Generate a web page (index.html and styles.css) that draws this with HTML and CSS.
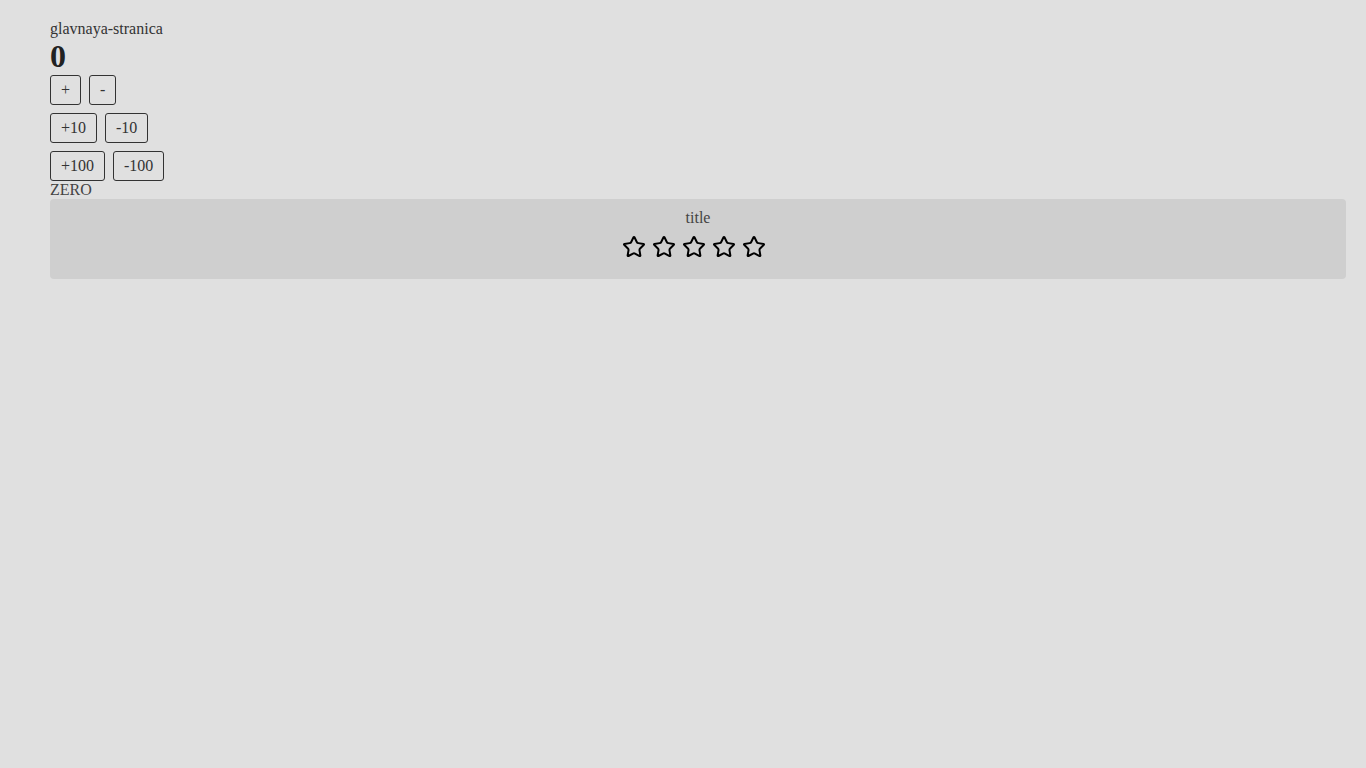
FILE: index.html
```html
<!DOCTYPE html>
<html>
<head>
<meta charset="utf-8">
<link rel="stylesheet" href="styles.css">
</head>
<body>
<div class="page">
  <div class="label">glavnaya-stranica</div>
  <h1 class="count">0</h1>
  <div class="row"><button class="btn">+</button><button class="btn">-</button></div>
  <div class="row"><button class="btn">+10</button><button class="btn">-10</button></div>
  <div class="row row-last"><button class="btn">+100</button><button class="btn">-100</button></div>
  <div class="zero">ZERO</div>
  <div class="panel">
    <div class="title">title</div>
    <div class="stars">
      <svg viewBox="0 0 24 24"><path d="M11.525 2.295a.53.53 0 0 1 .95 0l2.31 4.679a2.123 2.123 0 0 0 1.595 1.16l5.166.756a.53.53 0 0 1 .294.904l-3.736 3.638a2.123 2.123 0 0 0-.611 1.878l.882 5.14a.53.53 0 0 1-.771.56l-4.618-2.428a2.122 2.122 0 0 0-1.973 0L6.396 21.010a.53.53 0 0 1-.77-.56l.881-5.139a2.122 2.122 0 0 0-.611-1.879L2.16 9.795a.53.53 0 0 1 .294-.906l5.165-.755a2.122 2.122 0 0 0 1.597-1.16z"/></svg>
      <svg viewBox="0 0 24 24"><path d="M11.525 2.295a.53.53 0 0 1 .95 0l2.31 4.679a2.123 2.123 0 0 0 1.595 1.16l5.166.756a.53.53 0 0 1 .294.904l-3.736 3.638a2.123 2.123 0 0 0-.611 1.878l.882 5.14a.53.53 0 0 1-.771.56l-4.618-2.428a2.122 2.122 0 0 0-1.973 0L6.396 21.010a.53.53 0 0 1-.77-.56l.881-5.139a2.122 2.122 0 0 0-.611-1.879L2.16 9.795a.53.53 0 0 1 .294-.906l5.165-.755a2.122 2.122 0 0 0 1.597-1.16z"/></svg>
      <svg viewBox="0 0 24 24"><path d="M11.525 2.295a.53.53 0 0 1 .95 0l2.31 4.679a2.123 2.123 0 0 0 1.595 1.16l5.166.756a.53.53 0 0 1 .294.904l-3.736 3.638a2.123 2.123 0 0 0-.611 1.878l.882 5.14a.53.53 0 0 1-.771.56l-4.618-2.428a2.122 2.122 0 0 0-1.973 0L6.396 21.010a.53.53 0 0 1-.77-.56l.881-5.139a2.122 2.122 0 0 0-.611-1.879L2.16 9.795a.53.53 0 0 1 .294-.906l5.165-.755a2.122 2.122 0 0 0 1.597-1.160z"/></svg>
      <svg viewBox="0 0 24 24"><path d="M11.525 2.295a.53.53 0 0 1 .95 0l2.31 4.679a2.123 2.123 0 0 0 1.595 1.16l5.166.756a.53.53 0 0 1 .294.904l-3.736 3.638a2.123 2.123 0 0 0-.611 1.878l.882 5.14a.53.53 0 0 1-.771.56l-4.618-2.428a2.122 2.122 0 0 0-1.973 0L6.396 21.010a.53.53 0 0 1-.77-.56l.881-5.139a2.122 2.122 0 0 0-.611-1.879L2.16 9.795a.53.53 0 0 1 .294-.906l5.165-.755a2.122 2.122 0 0 0 1.597-1.16z"/></svg>
      <svg viewBox="0 0 24 24"><path d="M11.525 2.295a.53.53 0 0 1 .95 0l2.31 4.679a2.123 2.123 0 0 0 1.595 1.16l5.166.756a.53.53 0 0 1 .294.904l-3.736 3.638a2.123 2.123 0 0 0-.611 1.878l.882 5.14a.53.53 0 0 1-.771.56l-4.618-2.428a2.122 2.122 0 0 0-1.973 0L6.396 21.010a.53.53 0 0 1-.77-.56l.881-5.139a2.122 2.122 0 0 0-.611-1.879L2.16 9.795a.53.53 0 0 1 .294-.906l5.165-.755a2.122 2.122 0 0 0 1.597-1.16z"/></svg>
    </div>
  </div>
</div>
</body>
</html>
```

FILE: styles.css
```css
html, body {
  margin: 0;
  padding: 0;
  background: #e0e0e0;
}
body {
  font-family: "Liberation Serif", "Times New Roman", serif;
  font-size: 16px;
  color: #333;
}
.page {
  padding: 19px 20px 0 50px;
}
.label {
  line-height: 19px;
}
.count {
  margin: 0;
  font-size: 32px;
  font-weight: bold;
  line-height: 37px;
  color: #222;
}
.row {
  display: flex;
  gap: 8px;
  margin-bottom: 8px;
}
.row-last {
  margin-bottom: 0;
}
.btn {
  font-family: "Liberation Serif", "Times New Roman", serif;
  font-size: 16px;
  line-height: 18px;
  color: #333;
  background: transparent;
  border: 1px solid #333;
  border-radius: 3px;
  padding: 5px 10px;
  margin: 0;
}
.zero {
  line-height: 18px;
  color: #444;
}
.panel {
  background: #cfcfcf;
  border-radius: 4px;
  padding: 10px 0 20px;
  text-align: center;
}
.title {
  line-height: 18px;
  color: #444;
}
.stars {
  display: flex;
  justify-content: center;
  gap: 6px;
  margin-top: 8px;
  padding-right: 8px;
}
.stars svg {
  width: 24px;
  height: 24px;
  fill: none;
  stroke: #000;
  stroke-width: 2;
  stroke-linejoin: round;
  stroke-linecap: round;
}
```
